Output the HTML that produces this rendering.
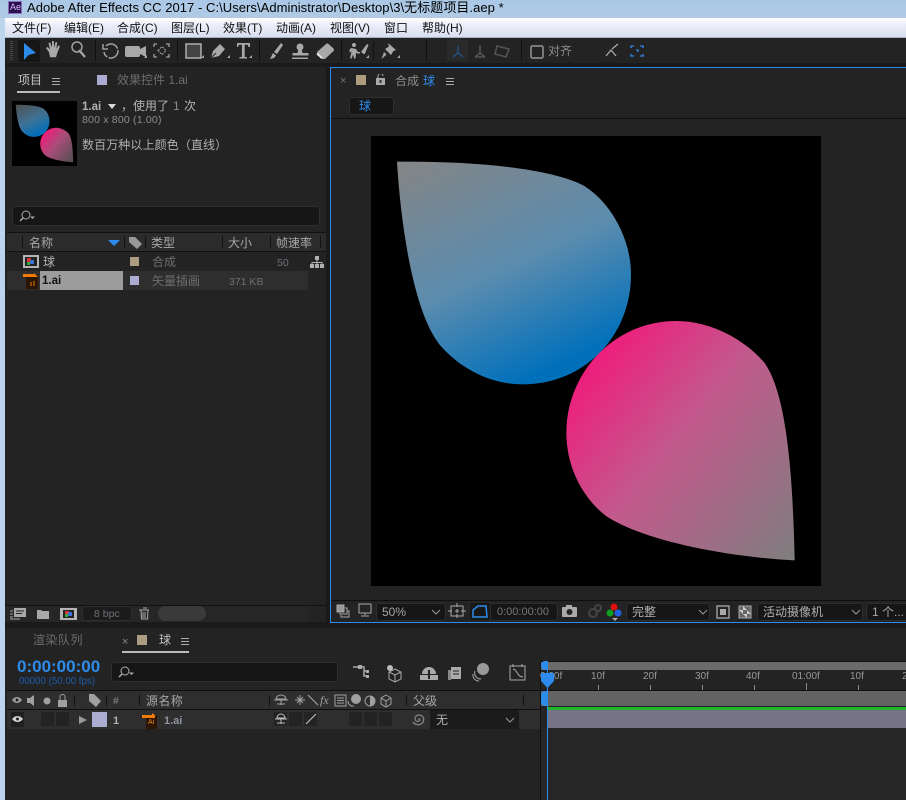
<!DOCTYPE html>
<html><head><meta charset="utf-8">
<style>
html,body{margin:0;padding:0;background:#1a1a1a}
#r{position:relative;width:906px;height:800px;overflow:hidden;background:#1a1a1a;font:12px "Liberation Sans","Noto Sans CJK SC",sans-serif;color:#a0a0a0}
#r div,#r span,#r svg{position:absolute}
#r span{white-space:nowrap;line-height:14px}
.b{background:#161616;border:1px solid #2e2e2e;border-radius:3px;box-sizing:border-box}
.s{background:#111;width:1px}
</style></head><body><div id="r">
<!-- title -->
<div style="left:0;top:0;width:906px;height:18px;background:linear-gradient(#aac8e6,#b0cae4)"></div>
<div style="left:0;top:18px;width:5px;height:782px;background:#bcd4ec"></div>
<div style="left:8px;top:1px;width:14px;height:13px;background:#2a0f4e;border:1px solid #8a6ec0;box-sizing:border-box"></div>
<span style="left:10px;top:2px;font-size:9px;color:#d8b8ff;line-height:11px">Ae</span>
<span style="left:27px;top:0;color:#000;font-size:13px;line-height:15px;letter-spacing:.05px">Adobe After Effects CC 2017 - C:\Users\Administrator\Desktop\3\无标题项目.aep *</span>
<!-- menu -->
<div style="left:5px;top:18px;width:901px;height:19px;background:linear-gradient(#fff,#eef0fa 30%,#d8def0);border-bottom:1px solid #a8b0c4"></div>
<span style="left:12px;top:21px;color:#111">文件(F)</span>
<span style="left:64px;top:21px;color:#111">编辑(E)</span>
<span style="left:117px;top:21px;color:#111">合成(C)</span>
<span style="left:171px;top:21px;color:#111">图层(L)</span>
<span style="left:223px;top:21px;color:#111">效果(T)</span>
<span style="left:276px;top:21px;color:#111">动画(A)</span>
<span style="left:330px;top:21px;color:#111">视图(V)</span>
<span style="left:384px;top:21px;color:#111">窗口</span>
<span style="left:422px;top:21px;color:#111">帮助(H)</span>
<!-- toolbar -->
<div style="left:5px;top:38px;width:901px;height:25px;background:#232323"></div>
<div style="left:10px;top:41px;width:3px;height:19px;background:repeating-linear-gradient(#444 0 1px,#232323 1px 2px)"></div>
<div style="left:18px;top:40px;width:22px;height:22px;background:#161616;border-radius:3px"></div>
<svg style="left:5px;top:38px" width="901" height="25" viewBox="0 0 901 25">
<path d="M19 5V22l4.500-5 7.500-2z" fill="#2d8ceb"/>
<g fill="#a8a8a8" stroke="none">
<path d="M44 14l-3-4 1.500-1 2.500 2.500-1.500-6.500 1.700-.5 1.800 5 0-6.500 1.700 0 .6 6.500 1.200-5.500 1.700.4-.8 6.500 2-3.500 1.500.8-2.700 7-1.200 4h-6z"/>
<path d="M74 12l6 7" stroke="#a8a8a8" stroke-width="2.200"/>
<path d="M122 8h11a2 2 0 0 1 2 2v7a2 2 0 0 1-2 2h-11a2 2 0 0 1-2-2v-7a2 2 0 0 1 2-2zM135 11l6-3v11l-6-3z"/>
<rect x="181" y="6" width="15" height="14" fill="#444" stroke="#b0b0b0" stroke-width="1.500"/>
<path d="M206 20l2-7 7-7 5 5-6 7z"/><path d="M206 20l5-5" stroke="#222"/>
<path d="M232 5h13v4h-1.500l-.8-2.300h-3V19h2.300v1.500h-7.500V19h2.400V6.700h-3l-.8 2.300H232z"/>
<path d="M276 5l2 2-6 9-3-2zM268 15l3 2.500-2 2.500-4 1z"/>
<circle cx="295" cy="9" r="3.500"/><path d="M293.500 11h3l1 4h6v2.500h-16V15h5zM287 19.500h16v1.500h-16z"/>
<path d="M312 14l9-8a2 2 0 0 1 2.500 0l5 4.500a2 2 0 0 1 0 2.500l-8.500 8h-4z"/><path d="M312.500 14.500l5.500 5.500h-2.500l-4-3.500z" fill="#e8e8e8"/>
<circle cx="349" cy="7" r="2"/><path d="M346 10l5 1 2 3h2v1.500h-3l-1-1-.5 6h-1.500l-1-4-1.500 4h-1.500l1.500-7-2 1v-2.500zM356 14l6-8 1.500 1-4 9.500z"/>
<path d="M383 5l8 7-2.500 1-2.500 4-6-6 4-2.500zM379 14l2.500 2.500-5 4.500z"/>
<path d="M139 20l3-3v3zM196 20l3-3v3zM222 20l3-3v3zM244 20l3-3v3zM361 20l3-3v3zM392 20l3-3v3z"/>
</g>
<g fill="none" stroke="#a0a0a0" stroke-width="1.500">
<path d="M101 8a7 7 0 1 1-2 6" stroke-dasharray="14 1.500"/><path d="M98 6v5h5"/>
<circle cx="72" cy="9" r="5"/>
<path d="M149 6h3m9 0h3v3m0 7v3h-3m-9 0h-3v-3m0-7v-3" stroke-width="1.300"/><path d="M153 12.500l4-4 4 4-4 4z" stroke-width="1" stroke-dasharray="2 1"/>
</g>
<rect x="442" y="2" width="21" height="21" rx="2" fill="#2a2a2a"/>
<g fill="none" stroke-width="1.500"><path d="M453 8v7m0 0l-5 4m5-4l5 4" stroke="#24527c"/><path d="M475 7v8l-5 4m5-4l5 4m-10 0h10" stroke="#555"/><path d="M492 8l12 3-3 8-11-3z" stroke="#555"/></g>
<rect x="526" y="8" width="12" height="12" rx="1.500" fill="none" stroke="#888" stroke-width="1.700"/>
<path d="M601 18l5-6 5 6M607 11l6-5" fill="none" stroke="#aaa" stroke-width="1.300"/>
<path d="M626 9V7h3m6 0h3v2m0 6v2h-3m-6 0h-3v-2m5-4h2v2" transform="translate(0,1)" fill="none" stroke="#2d8ceb" stroke-width="1.300"/>
<g fill="#111"><rect x="90" y="2" width="1" height="21"/><rect x="172" y="2" width="1" height="21"/><rect x="254" y="2" width="1" height="21"/><rect x="336" y="2" width="1" height="21"/><rect x="368" y="2" width="1" height="21"/><rect x="421" y="2" width="1" height="21"/><rect x="516" y="2" width="1" height="21"/></g>
</svg>
<span style="left:548px;top:44px;color:#8c8c8c">对齐</span>
<!-- project panel -->
<div style="left:5px;top:67px;width:321px;height:555px;background:#232323"></div>
<span style="left:18px;top:73px;color:#c4c4c4">项目</span>
<div style="left:52px;top:78px;width:8px;height:1px;background:#aaa;box-shadow:0 3px #aaa,0 6px #aaa"></div>
<div style="left:17px;top:91px;width:43px;height:2px;background:#bbb"></div>
<div style="left:97px;top:75px;width:10px;height:10px;background:#acabd0"></div>
<span style="left:117px;top:73px;color:#6e6e6e">效果控件 1.ai</span>
<svg style="left:12px;top:101px" width="65" height="65" viewBox="0 0 1350 1350">
<defs><linearGradient id="ta" gradientUnits="userSpaceOnUse" x1="78" y1="77" x2="393" y2="767"><stop offset="0" stop-color="#505050"/><stop offset=".56" stop-color="#3f7195"/><stop offset="1" stop-color="#0070bb"/></linearGradient>
<linearGradient id="tb" gradientUnits="userSpaceOnUse" x1="610" y1="740" x2="1271" y2="1273"><stop offset="0" stop-color="#ee1e7c"/><stop offset=".41" stop-color="#a84d78"/><stop offset="1" stop-color="#4e4e4e"/></linearGradient></defs>
<rect width="1350" height="1350" fill="#000"/>
<path d="M78 77C300 75 540 95 640 150C720 200 780 310 780 415C780 600 640 745 455 745C350 745 260 690 205 625C130 530 90 280 78 77Z" fill="url(#ta)"/>
<path d="M1271 1273C1050 1262 810 1210 705 1140C640 1090 586 1000 586 890C586 710 730 555 915 555C1020 555 1120 610 1180 680C1245 770 1265 1000 1271 1273Z" fill="url(#tb)"/>
</svg>
<span style="left:82px;top:99px;color:#b4b4b4"><b style="font-size:11.500px">1.ai</b></span>
<svg style="left:108px;top:104px" width="9" height="6"><path d="M0 0h8L4 5z" fill="#ddd"/></svg>
<span style="left:121px;top:99px;color:#b4b4b4">，使用了</span>
<span style="left:173px;top:99px;color:#8a8a8a">1</span><span style="left:184px;top:99px;color:#b4b4b4">次</span>
<span style="left:82px;top:113px;color:#8c8c8c;font-size:10.500px;letter-spacing:.2px">800 x 800 (1.00)</span>
<span style="left:82px;top:138px;color:#b0b0b0;letter-spacing:.1px">数百万种以上颜色（直线）</span>
<div class="b" style="left:12px;top:206px;width:308px;height:20px"></div>
<svg style="left:18px;top:209px" width="20" height="14" fill="none" stroke="#aaa"><circle cx="8" cy="6" r="4"/><path d="M5 9l-3 3" stroke-width="1.500"/><path d="M12 7.500h5l-2.500 2.500z" fill="#aaa" stroke="none"/></svg>
<div style="left:7px;top:232px;width:319px;height:1px;background:#111"></div>
<div style="left:7px;top:233px;width:319px;height:18px;background:#2b2b2b"></div>
<div style="left:7px;top:251px;width:319px;height:1px;background:#111"></div>
<div class="s" style="left:22px;top:236px;height:12px"></div>
<div class="s" style="left:124px;top:236px;height:12px"></div>
<div class="s" style="left:145px;top:236px;height:12px"></div>
<div class="s" style="left:222px;top:236px;height:12px"></div>
<div class="s" style="left:270px;top:236px;height:12px"></div>
<div class="s" style="left:320px;top:236px;height:12px"></div>
<span style="left:29px;top:236px;color:#a8a8a8">名称</span>
<svg style="left:108px;top:240px" width="13" height="7"><path d="M0 0h12L6 6z" fill="#2d8ceb"/></svg>
<svg style="left:128px;top:236px" width="15" height="14"><path d="M1 1h6l7 7-5 5-8-7z" fill="#999"/></svg>
<span style="left:151px;top:236px;color:#a8a8a8">类型</span>
<span style="left:228px;top:236px;color:#a8a8a8">大小</span>
<span style="left:276px;top:236px;color:#a8a8a8">帧速率</span>
<svg style="left:23px;top:255px" width="17" height="13"><rect width="16" height="13" fill="#b5b5b5"/><rect x="2" y="2" width="12" height="9" fill="#222"/><rect x="4" y="3" width="4" height="4" fill="#d33"/><rect x="7" y="5" width="4" height="4" fill="#3a6fd8"/><rect x="4" y="7" width="3" height="3" fill="#3a3"/></svg>
<span style="left:43px;top:255px;color:#b4b4b4">球</span>
<div style="left:130px;top:257px;width:9px;height:9px;background:#ac9d80"></div>
<span style="left:152px;top:255px;color:#6e6e6e">合成</span>
<span style="left:277px;top:256px;color:#6c7278;font-size:10.500px">50</span>
<svg style="left:310px;top:255px" width="14" height="14" fill="#b0b0b0"><rect x="5" y="1" width="4" height="4"/><rect x="0" y="9" width="4" height="4"/><rect x="5" y="9" width="4" height="4"/><rect x="10" y="9" width="4" height="4"/><path d="M6.500 5h1v2h5v2h-1V8h-4v1h-1V8h-4v1h-1V7h5z"/></svg>
<div style="left:7px;top:271px;width:301px;height:19px;background:#2e2e2e"></div>
<div style="left:40px;top:271px;width:83px;height:19px;background:#9c9c9c"></div>
<svg style="left:23px;top:273px" width="16" height="16"><rect x="3" y="2" width="12" height="14" fill="#2b1505"/><path d="M0 1h12v3H0z" fill="#f07b0a"/><path d="M11 0l4 4h-4z" fill="#f07b0a"/><path d="M8 13V9M11 13V8" stroke="#f07b0a"/></svg>
<span style="left:42px;top:274px;color:#111;font-weight:bold;font-size:11.500px">1.ai</span>
<div style="left:130px;top:276px;width:9px;height:9px;background:#acabd0"></div>
<span style="left:152px;top:274px;color:#6e6e6e">矢量插画</span>
<span style="left:229px;top:275px;color:#707070;font-size:10.500px">371 KB</span>
<!-- project bottom -->
<div style="left:5px;top:605px;width:321px;height:1px;background:#111"></div>
<div style="left:5px;top:606px;width:303px;height:16px;background:#262626"></div>
<svg style="left:10px;top:607px" width="145" height="15" fill="none">
<rect x="4" y="1" width="12" height="9" fill="#a8a8a8"/><path d="M6 4h8M6 6.500h6" stroke="#222"/><path d="M0 4h3M0 7h3M0 10h3M0 12h10" stroke="#a8a8a8"/>
<path d="M27 3h4l1 1h7v8H27z" fill="#a8a8a8"/>
<rect x="50" y="1" width="17" height="12" fill="#b5b5b5"/><rect x="53" y="3" width="11" height="8" fill="#222"/><rect x="55" y="4" width="4" height="4" fill="#d33"/><rect x="58" y="5" width="4" height="4" fill="#3a6fd8"/><rect x="55" y="7" width="3" height="3" fill="#3a3"/>
<path d="M129 3h10M131 3l.5 9h6l.5-9M133 1h4M133 5v6M135 5v6" stroke="#aaa"/>
</svg>
<div class="b" style="left:82px;top:606px;width:50px;height:15px;background:#1b1b1b"></div>
<span style="left:94px;top:608px;color:#6c7278;font-size:10.500px;line-height:13px">8 bpc</span>
<div style="left:158px;top:606px;width:48px;height:15px;border-radius:8px;background:#3a3a3a"></div>
<!-- comp panel -->
<div style="left:330px;top:67px;width:576px;height:556px;background:#232323;border:1px solid #2d8ceb;border-right:none;box-sizing:border-box"></div>
<span style="left:340px;top:74px;color:#777;font-size:11px">×</span>
<div style="left:356px;top:75px;width:10px;height:10px;background:#ac9d80"></div>
<svg style="left:376px;top:74px" width="10" height="11"><rect y="4" width="9" height="7" fill="#aaa"/><path d="M2 4V2a2.500 2.500 0 0 1 5 0" fill="none" stroke="#aaa"/><rect x="3.500" y="6" width="2" height="3" fill="#333"/></svg>
<span style="left:395px;top:74px;color:#8c8c8c">合成</span>
<span style="left:423px;top:74px;color:#2d8ceb">球</span>
<div style="left:446px;top:78px;width:8px;height:1px;background:#aaa;box-shadow:0 3px #aaa,0 6px #aaa"></div>
<div class="b" style="left:349px;top:97px;width:45px;height:18px"></div>
<span style="left:359px;top:99px;color:#2d8ceb">球</span>
<div style="left:331px;top:118px;width:575px;height:1px;background:#0f0f0f"></div>
<svg style="left:371px;top:136px" width="450" height="450" viewBox="0 0 1350 1350">
<defs><linearGradient id="a" gradientUnits="userSpaceOnUse" x1="78" y1="77" x2="393" y2="767"><stop offset="0" stop-color="#858585"/><stop offset=".56" stop-color="#5b8cae"/><stop offset="1" stop-color="#0070bb"/></linearGradient>
<linearGradient id="b" gradientUnits="userSpaceOnUse" x1="610" y1="740" x2="1271" y2="1273"><stop offset="0" stop-color="#ee1e7c"/><stop offset=".41" stop-color="#c25a8d"/><stop offset="1" stop-color="#7e7e7e"/></linearGradient></defs>
<rect width="1350" height="1350" fill="#000"/>
<path d="M78 77C300 75 540 95 640 150C720 200 780 310 780 415C780 600 640 745 455 745C350 745 260 690 205 625C130 530 90 280 78 77Z" fill="url(#a)"/>
<path d="M1271 1273C1050 1262 810 1210 705 1140C640 1090 586 1000 586 890C586 710 730 555 915 555C1020 555 1120 610 1180 680C1245 770 1265 1000 1271 1273Z" fill="url(#b)"/>
</svg>
<div style="left:331px;top:600px;width:575px;height:1px;background:#0f0f0f"></div>
<svg style="left:331px;top:601px" width="575" height="21" fill="none" stroke="#aaa">
<path d="M6 4h7v7H6z" fill="#999"/><path d="M14 7h2v6H9v-1M16 10h2v6h-8v-2"/>
<rect x="28" y="3" width="12" height="9"/><path d="M34 12v2M30 15h8"/>
<path d="M120 5h12v10h-12zM126 2v4M126 13v4M117 10h4M130 10h5M124 10h4M126 8v4"/>
<rect x="138" y="1" width="22" height="19" rx="3" fill="#181818" stroke="#2e2e2e"/>
<path d="M142 16V9l5-4h8l1 11z" stroke="#2d8ceb" stroke-width="1.500"/>
<rect x="231" y="6" width="15" height="10" rx="1" fill="#aaa" stroke="none"/><circle cx="238.500" cy="11" r="3" fill="#232323" stroke="none"/><rect x="235" y="4" width="6" height="3" fill="#aaa" stroke="none"/>
<circle cx="262" cy="12" r="4" stroke="#444" stroke-width="2"/><circle cx="267" cy="7" r="3" stroke="#444" stroke-width="2"/>
<circle cx="283" cy="6" r="3.500" fill="#e01010" stroke="none"/><circle cx="279" cy="12" r="3.500" fill="#10a020" stroke="none"/><circle cx="287" cy="12" r="3.500" fill="#2060e0" stroke="none"/>
<path d="M281 17h6l-3 3z" fill="#aaa" stroke="none"/>
<rect x="386" y="5" width="12" height="12" stroke-width="1.300"/><rect x="389" y="8" width="6" height="6" fill="#aaa" stroke="none"/>
<rect x="408" y="5" width="12" height="12" fill="#666" stroke="#aaa"/><path d="M408 9h4v4h4v4M412 5v4h4v4h4" stroke="none" fill="#ccc"/>
</svg>
<div class="b" style="left:376px;top:603px;width:70px;height:18px"></div>
<span style="left:382px;top:605px;color:#a4a4a4">50%</span>
<svg style="left:431px;top:609px" width="10" height="6" fill="none" stroke="#999"><path d="M1 1l4 4 4-4"/></svg>
<div class="b" style="left:490px;top:603px;width:68px;height:18px"></div>
<span style="left:497px;top:605px;color:#777;font-size:11px">0:00:00:00</span>
<div class="b" style="left:626px;top:603px;width:84px;height:18px"></div>
<span style="left:632px;top:605px;color:#b0b0b0">完整</span>
<svg style="left:698px;top:609px" width="10" height="6" fill="none" stroke="#999"><path d="M1 1l4 4 4-4"/></svg>
<div class="b" style="left:757px;top:603px;width:106px;height:18px"></div>
<span style="left:763px;top:605px;color:#b0b0b0">活动摄像机</span>
<svg style="left:851px;top:609px" width="10" height="6" fill="none" stroke="#999"><path d="M1 1l4 4 4-4"/></svg>
<div class="b" style="left:866px;top:603px;width:50px;height:18px"></div>
<span style="left:872px;top:605px;color:#a8a8a8">1 个...</span>
<!-- timeline panel -->
<div style="left:5px;top:628px;width:901px;height:172px;background:#232323"></div>
<span style="left:33px;top:633px;color:#6e6e6e;letter-spacing:.5px">渲染队列</span>
<span style="left:122px;top:635px;color:#888;font-size:11px">×</span>
<div style="left:137px;top:635px;width:10px;height:10px;background:#ac9d80"></div>
<span style="left:159px;top:633px;color:#c0c0c0">球</span>
<div style="left:181px;top:638px;width:8px;height:1px;background:#aaa;box-shadow:0 3px #aaa,0 6px #aaa"></div>
<div style="left:122px;top:651px;width:67px;height:2px;background:#bbb"></div>
<span style="left:17px;top:658px;color:#2d8ceb;font-size:17px;font-weight:bold;line-height:18px">0:00:00:00</span>
<span style="left:19px;top:675px;color:#1e5ca8;font-size:9.700px;line-height:13px">00000 (50.00 fps)</span>
<div class="b" style="left:111px;top:662px;width:227px;height:20px"></div>
<svg style="left:117px;top:665px" width="20" height="14" fill="none" stroke="#aaa"><circle cx="8" cy="6" r="4"/><path d="M5 9l-3 3" stroke-width="1.500"/><path d="M12 7.500h5l-2.500 2.500z" fill="#aaa" stroke="none"/></svg>
<svg style="left:350px;top:662px" width="180" height="22" fill="none" stroke="#aaa">
<path d="M3 5h6M10 5h4v9h3M14 9h4" stroke-width="1.500"/><rect x="8" y="3" width="4" height="4" fill="#aaa" stroke="none"/><rect x="16" y="8" width="3" height="3" fill="#aaa" stroke="none"/><rect x="16" y="13" width="3" height="3" fill="#aaa" stroke="none"/>
<circle cx="40" cy="6" r="3" fill="#bbb" stroke="none"/><path d="M45 7l6 3v7l-6 3-6-3v-7z"/><path d="M39 10l6 3 6-3M45 13v7"/>
<path d="M72 12a7 7 0 0 1 14 0zM70 13h18v5H70z" fill="#aaa" stroke="none"/><rect x="78" y="8" width="2" height="9" fill="#222" stroke="none"/>
<rect x="101" y="5" width="10" height="12" fill="#aaa" stroke="none"/><rect x="98" y="8" width="3" height="10" fill="#888" stroke="none"/><path d="M103 9h6M103 12h6" stroke="#222"/>
<circle cx="133" cy="7" r="6" fill="#999" stroke="none"/><path d="M125 9a6 6 0 0 0 6 8M123 12a6 6 0 0 0 6 7"/>
<rect x="160" y="4" width="15" height="14"/><path d="M163 7c4 0 4 8 10 8M163 2v3M172 2v3"/>
</svg>
<!-- timeline header -->
<div style="left:7px;top:690px;width:533px;height:1px;background:#0f0f0f"></div>
<div style="left:7px;top:691px;width:533px;height:18px;background:#2e2e2e"></div>
<div style="left:7px;top:709px;width:533px;height:1px;background:#0f0f0f"></div>
<div style="left:7px;top:710px;width:533px;height:19px;background:#2e2e2e"></div>
<svg style="left:12px;top:693px" width="530" height="16" fill="#a0a0a0">
<path d="M0 7c3-4 7-4 10 0-3 4-7 4-10 0z"/><circle cx="5" cy="7" r="1.500" fill="#222"/>
<path d="M15 5h3l4-3v11l-4-3h-3z"/><circle cx="35" cy="8" r="3.500"/>
<rect x="46" y="7" width="9" height="7"/><path d="M48 7V4a2.500 2.500 0 0 1 5 0v3" fill="none" stroke="#a0a0a0"/>
<path d="M77 1h5l7 7-5 6-7-6z"/>
<path d="M264 6a5 4 0 0 1 10 0zM262 7h14M269 6v6M265 11h8" fill="none" stroke="#a0a0a0"/>
<path d="M283 7h10M288 2v10M285 4l6 6M291 4l-6 6" stroke="#a0a0a0" fill="none"/>
<path d="M293 2l10 10" stroke="#a0a0a0" stroke-width="1.200" transform="translate(3,0)"/>
<rect x="323" y="2" width="11" height="11" fill="none" stroke="#a0a0a0"/><path d="M325 5h7M325 7.500h7M325 10h7" stroke="#a0a0a0"/>
<circle cx="344" cy="6" r="5"/><path d="M336 8a5 5 0 0 0 6 5" fill="none" stroke="#a0a0a0"/>
<circle cx="358" cy="8" r="5" fill="none" stroke="#a0a0a0"/><path d="M358 3a5 5 0 0 1 0 10z"/>
<path d="M374 2l5 3v6l-5 3-5-3V5zM369 5l5 3 5-3M374 8v6" fill="none" stroke="#a0a0a0"/>
</svg>
<span style="left:320px;top:693px;color:#a0a0a0;font-style:italic;font-size:12px;font-family:'Liberation Serif',serif">fx</span>
<div class="s" style="left:74px;top:695px;height:11px"></div>
<div class="s" style="left:106px;top:695px;height:11px"></div>
<div class="s" style="left:139px;top:695px;height:11px"></div>
<div class="s" style="left:269px;top:695px;height:11px"></div>
<div class="s" style="left:406px;top:695px;height:11px"></div>
<div class="s" style="left:523px;top:695px;height:11px"></div>
<span style="left:113px;top:694px;color:#8a8a8a;font-size:10.500px">#</span>
<span style="left:146px;top:694px;color:#a8a8a8;letter-spacing:.4px">源名称</span>
<span style="left:413px;top:694px;color:#a8a8a8">父级</span>
<!-- layer -->
<div style="left:11px;top:712px;width:13px;height:15px;background:#1f1f1f"></div>
<svg style="left:12px;top:715px" width="12" height="9"><path d="M0 4c3-4 8-4 11 0-3 4-8 4-11 0z" fill="#d0d0d0"/><circle cx="5.500" cy="4" r="1.500" fill="#222"/></svg>
<div style="left:41px;top:712px;width:13px;height:14px;background:#232323"></div>
<div style="left:56px;top:712px;width:13px;height:14px;background:#232323"></div>
<svg style="left:79px;top:716px" width="9" height="9"><path d="M0 0l8 4-8 4z" fill="#999"/></svg>
<div style="left:92px;top:712px;width:15px;height:15px;background:#acabd0"></div>
<span style="left:113px;top:714px;color:#b0b0b0;font-weight:bold;font-size:11px">1</span>
<svg style="left:142px;top:712px" width="16" height="17"><rect x="4" y="3" width="11" height="14" fill="#2b1505"/><path d="M0 3h13V6H0z" fill="#f07b0a"/><path d="M10 1l4 3h-4z" fill="#f07b0a"/></svg>
<span style="left:148px;top:718px;color:#f08a20;font-size:7px;line-height:9px">Ai</span>
<span style="left:164px;top:714px;color:#8e94a0;font-weight:bold;font-size:11px">1.ai</span>
<div style="left:274px;top:712px;width:13px;height:14px;background:#232323"></div>
<div style="left:289px;top:712px;width:13px;height:14px;background:#232323"></div>
<div style="left:304px;top:712px;width:13px;height:14px;background:#232323"></div>
<svg style="left:274px;top:712px" width="44" height="14" fill="none" stroke="#bbb"><path d="M3 6a4 4 0 0 1 8 0zM1 7h12M7 6v6M3 11h8"/><path d="M32 12l10-10" stroke-width="1.200"/></svg>
<div style="left:349px;top:712px;width:13px;height:14px;background:#232323"></div>
<div style="left:364px;top:712px;width:13px;height:14px;background:#232323"></div>
<div style="left:379px;top:712px;width:13px;height:14px;background:#232323"></div>
<svg style="left:411px;top:712px" width="14" height="14" fill="none" stroke="#888" stroke-width="1.200"><path d="M7 7a1.500 1.500 0 0 1 2 1 3 3 0 0 1-4 1 4 4 0 0 1 0-5 5 5 0 0 1 7 1 5 5 0 0 1-2 7 6 6 0 0 1-8-2"/></svg>
<div style="left:430px;top:710px;width:89px;height:19px;background:#1b1b1b"></div>
<span style="left:436px;top:713px;color:#b0b0b0">无</span>
<svg style="left:505px;top:717px" width="10" height="6" fill="none" stroke="#999"><path d="M1 1l4 4 4-4"/></svg>
<!-- timeline right -->
<div style="left:540px;top:661px;width:1px;height:139px;background:#0f0f0f"></div>
<div style="left:541px;top:661px;width:365px;height:1px;background:#111"></div>
<div style="left:541px;top:662px;width:365px;height:8px;background:#6b6b6b"></div>
<div style="left:541px;top:661px;width:7px;height:9px;background:#2d8ceb;border-radius:4px 0 0 4px"></div>
<div style="left:541px;top:670px;width:365px;height:20px;background:#232323"></div>
<div style="left:541px;top:690px;width:365px;height:1px;background:#0f0f0f"></div>
<div style="left:541px;top:691px;width:365px;height:15px;background:#636363"></div>
<div style="left:541px;top:691px;width:7px;height:15px;background:#2d8ceb;border-radius:4px 0 0 4px"></div>
<div style="left:541px;top:706px;width:365px;height:1px;background:#232323"></div>
<div style="left:548px;top:707px;width:358px;height:3px;background:#1db52a"></div>
<div style="left:548px;top:710px;width:358px;height:18px;background:#757385"></div>
<div style="left:541px;top:728px;width:365px;height:72px;background:#262626"></div>
<span style="left:540px;top:671px;color:#999;font-size:10px;line-height:12px">0:00f</span>
<span style="left:591px;top:671px;color:#999;font-size:10px;line-height:12px">10f</span>
<span style="left:643px;top:671px;color:#999;font-size:10px;line-height:12px">20f</span>
<span style="left:695px;top:671px;color:#999;font-size:10px;line-height:12px">30f</span>
<span style="left:746px;top:671px;color:#999;font-size:10px;line-height:12px">40f</span>
<span style="left:792px;top:671px;color:#999;font-size:10px;line-height:12px">01:00f</span>
<span style="left:850px;top:671px;color:#999;font-size:10px;line-height:12px">10f</span>
<span style="left:902px;top:671px;color:#999;font-size:10px;line-height:12px">20f</span>
<svg style="left:541px;top:670px" width="365" height="20" fill="#888"><rect x="57" y="15" width="1" height="5"/><rect x="109" y="15" width="1" height="5"/><rect x="161" y="15" width="1" height="5"/><rect x="213" y="15" width="1" height="5"/><rect x="265" y="13" width="1" height="7"/><rect x="317" y="15" width="1" height="5"/></svg>
<svg style="left:540px;top:672px" width="15" height="17"><path d="M1 1h13v8l-6.500 7L1 9z" fill="#2d8ceb"/></svg>
<div style="left:547px;top:662px;width:1px;height:138px;background:#2d8ceb"></div>
</div></body></html>
